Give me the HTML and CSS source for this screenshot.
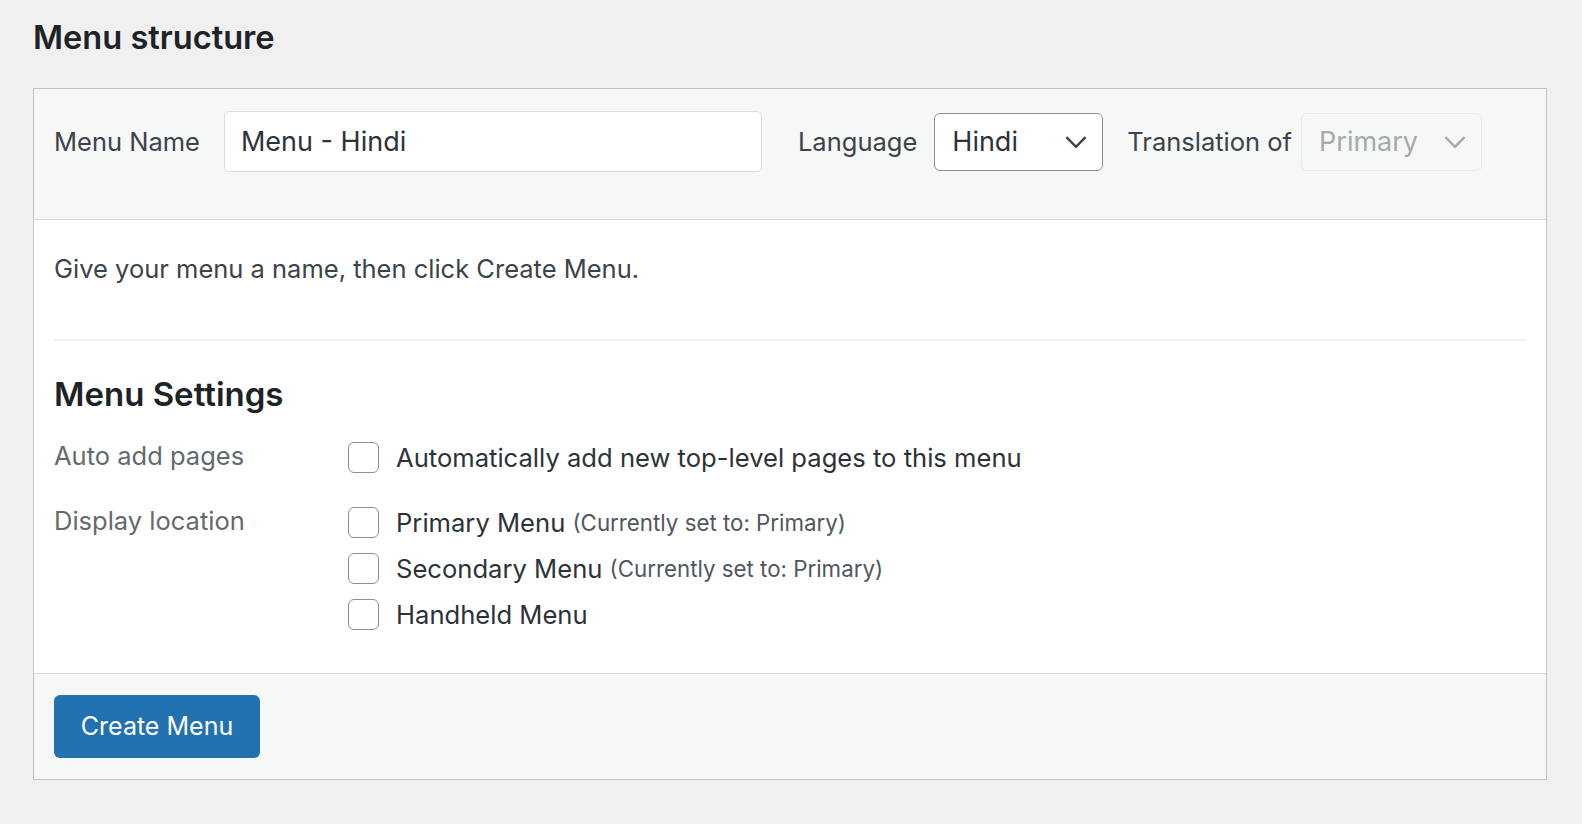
FILE: index.html
```html
<!DOCTYPE html>
<html lang="en">
<head>
    <meta charset="UTF-8">
    <title>Menus</title>
    <link rel="stylesheet" href="styles.css">
</head>
<body>
    <div class="wrap">
        <h2 class="page-title">Menu structure</h2>

        <div class="menu-box">
            <div class="menu-header">
                <label class="field-label" for="menuName">Menu Name</label>
                <input type="text" id="menuName" class="name-input" value="Menu - Hindi">

                <span class="field-label lang-label">Language</span>
                <div class="select">
                    <span>Hindi</span>
                    <svg class="chevron" viewBox="0 0 20 20" width="24" height="24"><path d="M2 6l8 8 8-8" fill="none" stroke="currentColor" stroke-width="2.1"/></svg>
                </div>

                <span class="field-label trans-label">Translation of</span>
                <div class="select disabled">
                    <span>Primary</span>
                    <svg class="chevron" viewBox="0 0 20 20" width="24" height="24"><path d="M2 6l8 8 8-8" fill="none" stroke="currentColor" stroke-width="2.1"/></svg>
                </div>
            </div>

            <div class="menu-body">
                <p class="intro">Give your menu a name, then click Create Menu.</p>
                <div class="divider"></div>

                <h3 class="settings-title">Menu Settings</h3>

                <div class="setting-row">
                    <div class="setting-label">Auto add pages</div>
                    <div class="setting-options">
                        <label class="check"><span class="box"></span>Automatically add new top-level pages to this menu</label>
                    </div>
                </div>

                <div class="setting-row">
                    <div class="setting-label">Display location</div>
                    <div class="setting-options">
                        <label class="check"><span class="box"></span>Primary Menu <span class="note">(Currently set to: Primary)</span></label>
                        <label class="check"><span class="box"></span>Secondary Menu <span class="note">(Currently set to: Primary)</span></label>
                        <label class="check"><span class="box"></span>Handheld Menu</label>
                    </div>
                </div>
            </div>

            <div class="menu-footer">
                <button class="button-primary">Create Menu</button>
            </div>
        </div>
    </div>
</body>
</html>
```

FILE: styles.css
```css
body {
    margin: 0;
    background-color: #f0f0f1;
    font-family: Inter, "Noto Sans", sans-serif;
    color: #1d2327;
}

.wrap {
    padding: 0 35px 0 33px;
}

.page-title {
    margin: 0;
    padding-top: 18px;
    font-size: 32.6px;
    line-height: 38px;
    font-weight: 600;
    color: #1d2327;
}

.menu-box {
    margin-top: 32px;
    border: 1.5px solid #c3c4c7;
    background-color: #fff;
}

/* header with name + language */
.menu-header {
    display: flex;
    align-items: center;
    background-color: #f6f7f7;
    border-bottom: 1.5px solid #dcdcde;
    padding: 22px 20px 47px;
}

.field-label {
    font-size: 25.5px;
    color: #3c434a;
}

.name-input {
    width: 538px;
    height: 61px;
    box-sizing: border-box;
    margin-left: 24px;
    padding: 0 16px;
    border: 1.5px solid #dcdcde;
    border-radius: 5px;
    font-family: inherit;
    font-size: 27px;
    color: #2c3338;
    background: #fff;
}

.lang-label {
    margin-left: 36px;
}

.select {
    display: flex;
    align-items: center;
    justify-content: space-between;
    width: 169px;
    height: 58px;
    box-sizing: border-box;
    margin-left: 17px;
    padding: 0 14px 0 17px;
    border: 1.5px solid #8c8f94;
    border-radius: 6px;
    background: #fff;
    font-size: 27px;
    color: #2c3338;
}

.select .chevron {
    color: #3c434a;
}

.trans-label {
    margin-left: 24px;
}

.select.disabled {
    width: 181px;
    margin-left: 9px;
    border: 1.5px dotted #dcdcde;
    background: #f6f7f7;
    color: #a7aaad;
}

.select.disabled .chevron {
    color: #a7aaad;
}

/* body */
.menu-body {
    padding: 0 20px 42px;
}

.intro {
    margin: 0;
    padding-top: 33px;
    font-size: 25.5px;
    line-height: 32px;
    color: #3c434a;
}

.divider {
    height: 1.5px;
    background-color: #f0f0f1;
    margin-top: 54px;
}

.settings-title {
    margin: 0;
    padding-top: 35px;
    font-size: 33px;
    line-height: 36px;
    font-weight: 600;
    color: #1d2327;
}

.setting-row {
    display: flex;
    margin-top: 28px;
}

.setting-row + .setting-row {
    margin-top: 31px;
}

.setting-label {
    width: 293px;
    flex-shrink: 0;
    font-size: 25.5px;
    line-height: 32px;
    color: #646970;
}

.setting-options {
    display: flex;
    flex-direction: column;
    gap: 14px;
    padding-top: 2px;
}

.check {
    display: flex;
    align-items: center;
    font-size: 25.6px;
    line-height: 32px;
    color: #2c3338;
    white-space: pre;
}

.check .box {
    width: 31px;
    height: 31px;
    box-sizing: border-box;
    margin-left: 1px;
    margin-right: 17px;
    border: 1.5px solid #8c8f94;
    border-radius: 6px;
    background: #fff;
}

.note {
    font-size: 22.3px;
    color: #50575e;
}

/* footer */
.menu-footer {
    background-color: #f6f7f7;
    border-top: 1.5px solid #dcdcde;
    padding: 21px 20px;
}

.button-primary {
    display: block;
    width: 206px;
    height: 63px;
    border: none;
    border-radius: 6px;
    background-color: #2271b1;
    color: #fff;
    font-family: inherit;
    font-size: 25px;
}
```
